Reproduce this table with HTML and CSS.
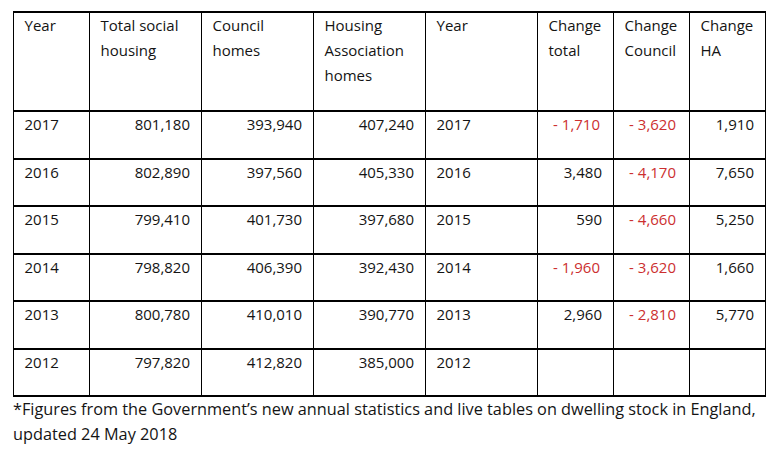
FILE: index.html
```html
<!DOCTYPE html>
<html>
<head>
<meta charset="utf-8">
<link rel="stylesheet" href="styles.css">
</head>
<body>
<div class="page">
<table class="stats">
  <colgroup>
    <col class="c-narrow"><col class="c-wide"><col class="c-wide"><col class="c-wide"><col class="c-wide"><col class="c-narrow"><col class="c-narrow"><col class="c-narrow">
  </colgroup>
  <thead>
    <tr>
      <th>Year</th>
      <th>Total social housing</th>
      <th>Council homes</th>
      <th>Housing Association homes</th>
      <th>Year</th>
      <th>Change total</th>
      <th>Change Council</th>
      <th>Change HA</th>
    </tr>
  </thead>
  <tbody>
    <tr><td>2017</td><td class="num">801,180</td><td class="num">393,940</td><td class="num">407,240</td><td>2017</td><td class="num neg">- 1,710</td><td class="num neg">- 3,620</td><td class="num">1,910</td></tr>
    <tr><td>2016</td><td class="num">802,890</td><td class="num">397,560</td><td class="num">405,330</td><td>2016</td><td class="num">3,480</td><td class="num neg">- 4,170</td><td class="num">7,650</td></tr>
    <tr><td>2015</td><td class="num">799,410</td><td class="num">401,730</td><td class="num">397,680</td><td>2015</td><td class="num">590</td><td class="num neg">- 4,660</td><td class="num">5,250</td></tr>
    <tr><td>2014</td><td class="num">798,820</td><td class="num">406,390</td><td class="num">392,430</td><td>2014</td><td class="num neg">- 1,960</td><td class="num neg">- 3,620</td><td class="num">1,660</td></tr>
    <tr><td>2013</td><td class="num">800,780</td><td class="num">410,010</td><td class="num">390,770</td><td>2013</td><td class="num">2,960</td><td class="num neg">- 2,810</td><td class="num">5,770</td></tr>
    <tr><td>2012</td><td class="num">797,820</td><td class="num">412,820</td><td class="num">385,000</td><td>2012</td><td class="num"></td><td class="num"></td><td class="num"></td></tr>
  </tbody>
</table>
<p class="note">*Figures from the Government’s new annual statistics and live tables on dwelling stock in England, updated 24 May 2018</p>
</div>
</body>
</html>
```
FILE: styles.css
```css
html, body {
  margin: 0;
  padding: 0;
  background: #ffffff;
}
body {
  font-family: "Open Sans", "Noto Sans", sans-serif;
  font-size: 15px;
  color: #141414;
}
.page {
  padding: 11px 0 0 13px;
  width: 765px;
}
.stats {
  border-collapse: collapse;
  table-layout: fixed;
  width: 752px;
}
.c-narrow { width: 76px; }
.c-wide { width: 112px; }
.stats th,
.stats td {
  border-left: 1px solid #000;
  border-right: 1px solid #000;
  border-top: 2px solid #000;
  border-bottom: 2px solid #000;
  vertical-align: top;
  text-align: left;
  font-weight: normal;
  line-height: 25px;
}
.stats th {
  height: 97px;
  padding: 0 3px 0 10.5px;
}
.stats td {
  height: 25px;
  padding: 0 11px 20.5px 10.5px;
}
.stats td.num {
  text-align: right;
}
.stats td.neg {
  color: #cc2f2f;
  padding-right: 13px;
}
.note {
  margin: 0;
  font-size: 16.3px;
  line-height: 25px;
  width: 765px;
}
```
